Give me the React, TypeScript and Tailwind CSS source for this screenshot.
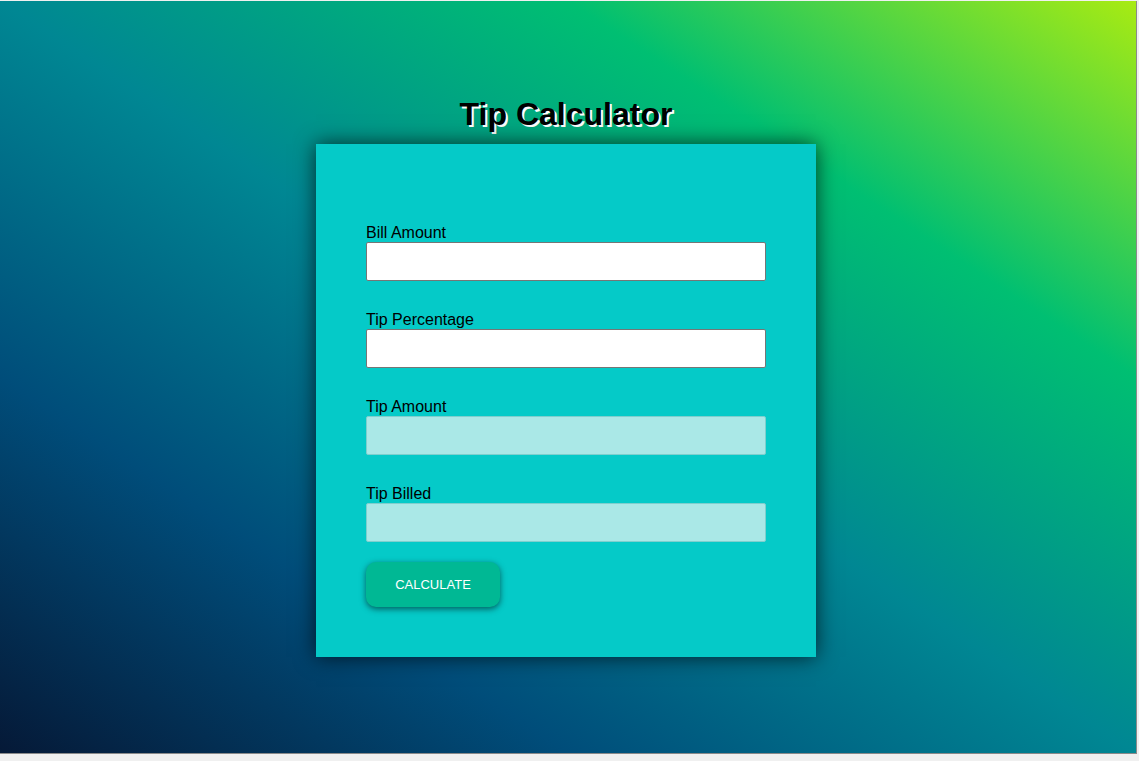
export default function App() {
  const fields = [
    { label: 'Bill Amount', readOnly: false },
    { label: 'Tip Percentage', readOnly: false },
    { label: 'Tip Amount', readOnly: true },
    { label: 'Tip Billed', readOnly: true },
  ];

  return (
    <div className="h-screen w-full bg-[#f0f0f0] pt-px font-['Liberation_Sans',Arial,sans-serif]">
      <div className="w-[1137px] h-[753px] border-r border-b border-[#8a8a8a] bg-[linear-gradient(to_right_top,#051937,#004d7a,#008793,#00bf72,#a8eb12)] flex flex-col items-center pt-[95px] pr-[4px]">
        {/* Title */}
        <h1 className="text-[32px] leading-[37px] font-bold text-black [text-shadow:2px_2px_0_#fff]">
          Tip Calculator
        </h1>

        {/* Card */}
        <div className="mt-[11px] w-[500px] bg-[#05cac8] px-[50px] pt-[80px] pb-[50px] shadow-[0_0_20px_rgba(0,0,0,0.7)]">
          <div className="flex flex-col gap-[30px]">
            {fields.map((f) => (
              <div key={f.label}>
                <label className="block text-[16px] leading-[18px] text-black">{f.label}</label>
                <input
                  type="text"
                  readOnly={f.readOnly}
                  className={
                    f.readOnly
                      ? 'block w-[400px] h-[39px] bg-[#aae8e7] border border-[#7fcfce] rounded-[2px] outline-none'
                      : 'block w-[400px] h-[39px] bg-white border border-[#767676] rounded-[2px] outline-none'
                  }
                />
              </div>
            ))}
          </div>

          <button className="mt-[20px] w-[134px] h-[45px] rounded-[10px] bg-[#00b894] text-white text-[13px] uppercase shadow-[0_2px_6px_rgba(0,0,0,0.55)]">
            Calculate
          </button>
        </div>
      </div>
    </div>
  );
}
